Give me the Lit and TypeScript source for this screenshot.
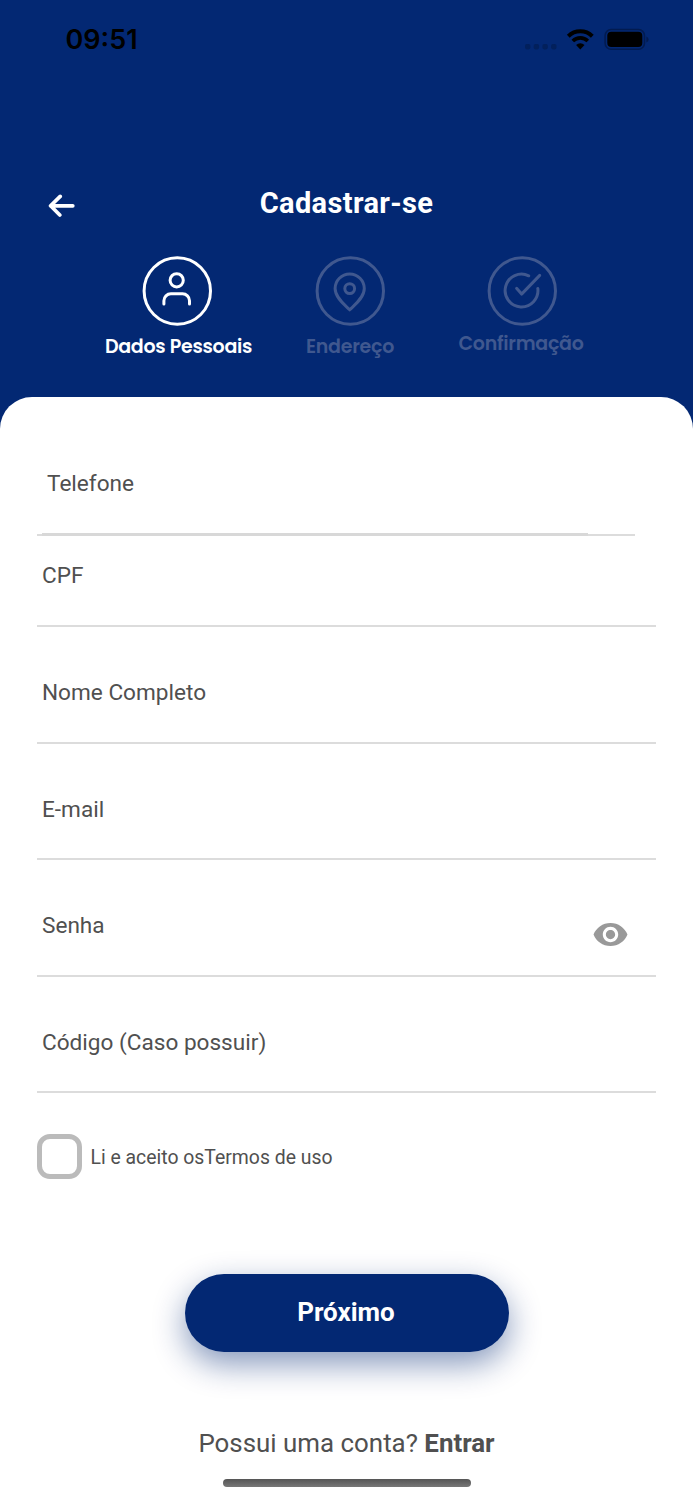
import { LitElement, html, css, svg, nothing } from "lit";
import { customElement, property, state } from "lit/decorators.js";

type StepIcon = "person" | "pin" | "check";

@customElement("status-bar")
class StatusBar extends LitElement {
  static styles = css`
    :host { display: flex; justify-content: space-between; height: 80px; padding: 0 44px 0 65.5px; box-sizing: border-box; }
    .time { font: 600 27px/32px Inter, sans-serif; color: #000; padding-top: 24px; letter-spacing: 0; }
    .icons { padding-top: 24px; display: block; }
  `;
  render() {
    return html`
      <span class="time">09:51</span>
      <svg class="icons" width="125" height="30" viewBox="524 24 125 30">
        <g fill="#02205c">
          ${[527.7, 536.4, 545.1, 553.8].map((x) => svg`<rect x=${x - 2.7} y="44" width="5.4" height="5.4" rx="1.8"/>`)}
        </g>
        <g fill="none" stroke="#000" stroke-width="4">
          <path d="M568.3 36.2a17.2 17.2 0 0 1 24 0"/>
          <path d="M572.8 41a10.8 10.8 0 0 1 15 0" stroke-width="3.7"/>
        </g>
        <path d="M580.3 49.4l-4.2-4.4a6.2 6.2 0 0 1 8.4 0z"/>
        <rect x="605.1" y="29.6" width="39.4" height="19.6" rx="6" fill="none" stroke="#021b50" stroke-width="1.5"/>
        <rect x="607.3" y="31.7" width="35" height="15.4" rx="4"/>
        <path d="M646.4 36.6q2.2 1 2.2 2.9t-2.2 2.9z" fill="#021b50"/>
      </svg>
    `;
  }
}

@customElement("signup-step")
class SignupStep extends LitElement {
  @property() icon: StepIcon = "person";
  @property() label = "";
  @property({ type: Boolean, reflect: true }) active = false;

  static styles = css`
    :host { display: flex; flex-direction: column; align-items: center; color: #40588f; }
    :host([active]) { color: #fff; }
    .ring { display: block; fill: none; stroke: currentColor; stroke-width: 3; stroke-linecap: round; stroke-linejoin: round; }
    .label { font: 600 19px/24px Poppins, Inter, sans-serif; letter-spacing: -0.27px; white-space: nowrap; margin-top: var(--gap, 9px); padding: 0 var(--pad-right, 0) 0 var(--pad-left, 0); }
  `;

  private glyph() {
    switch (this.icon) {
      case "person":
        return svg`<circle cx="34.4" cy="24.3" r="6.6"/><path d="M21.6 48v-3.2a7 7 0 0 1 7-7h11.6a7 7 0 0 1 7 7V48"/>`;
      case "pin":
        return svg`<path d="M34.4 53.8C30 49.4 19.8 42 19.8 32.6a14.6 14.6 0 0 1 29.2 0C49 42 38.8 49.4 34.4 53.8z"/><circle cx="34.4" cy="32.6" r="4.9"/>`;
      case "check":
        return svg`<path d="M41.4 19.8a16.4 16.4 0 1 0 9.1 12.6"/><path d="M29.3 32.3l5 5.8L52.4 19.4"/>`;
    }
  }

  render() {
    return html`
      <svg class="ring" width="70" height="70" viewBox="-0.3 0 70 70">
        <circle cx="35" cy="35" r="33.2"/>
        ${this.glyph()}
      </svg>
      <span class="label">${this.label}</span>
    `;
  }
}

@customElement("form-field")
class FormField extends LitElement {
  @property() label = "";
  @property({ type: Boolean }) secret = false;

  static styles = css`
    :host { display: block; margin-bottom: 25.6px; }
    .field { height: 91px; box-sizing: border-box; border-bottom: 2px solid #dcdcdc; display: flex; justify-content: space-between; padding: 26.4px 27.5px 0 5px; }
    .label { font: 400 22.6px/28px Roboto, sans-serif; color: #505050; white-space: nowrap; }
    .eye { display: block; width: 37px; height: 37px; fill: #999; margin-top: 4px; }
  `;
  render() {
    return html`
      <div class="field">
        <span class="label">${this.label}</span>
        ${this.secret
          ? html`<svg class="eye" viewBox="0 0 24 24"><path d="M12 4.5C7 4.5 2.73 7.61 1 12c1.73 4.39 6 7.5 11 7.5s9.27-3.11 11-7.5c-1.73-4.39-6-7.5-11-7.5zM12 17c-2.76 0-5-2.24-5-5s2.24-5 5-5 5 2.24 5 5-2.24 5-5 5zm0-8c-1.66 0-3 1.34-3 3s1.34 3 3 3 3-1.34 3-3-1.34-3-3-3z"/></svg>`
          : nothing}
      </div>
    `;
  }
}

@customElement("app-root")
class AppRoot extends LitElement {
  @state() private accepted = false;

  static styles = css`
    :host { display: block; width: 693px; height: 1500px; overflow: hidden; background: #032873; font-family: Roboto, sans-serif; color: #505050; }
    .top { height: 397px; }
    .title-row { display: grid; grid-template-columns: 1fr auto 1fr; align-items: start; padding: 104px 48px 0; height: 152px; box-sizing: border-box; }
    .back { display: block; margin-top: 9px; }
    .title { margin: 1px 0 0; font: 700 29px/36px Roboto, sans-serif; color: #fff; letter-spacing: 0.35px; }
    .steps { display: flex; margin-top: 24px; padding-left: 97px; }
    .step { width: 160px; --pad-left: 3px; }
    .step-2 { width: 186px; }
    .step-3 { width: 158px; --gap: 6px; --pad-right: 2px; }
    .card { height: 1103px; box-sizing: border-box; background: #fff; border-radius: 32px 32px 0 0; padding: 0 37px; }
    .phone { width: 597.5px; height: 139px; box-sizing: border-box; border-bottom: 2px solid #dcdcdc; padding: 73px 0 0 5px; display: flex; flex-direction: column; }
    .phone-label { font: 400 22.6px/28px Roboto, sans-serif; padding-left: 5px; }
    .phone-line { width: 546px; height: 3px; margin: auto 0 -2px; background: #d8d8d8; }
    .terms { display: flex; align-items: center; gap: 8.5px; height: 45px; margin-top: 40.6px; }
    .box { width: 45px; height: 45px; box-sizing: border-box; border: 5px solid #bbb; border-radius: 13px; }
    .terms-text { font-size: 19.4px; line-height: 24px; padding-top: 3px; }
    .next { display: block; margin: 95px 0 0 147.5px; width: 324px; height: 78px; border: 0; border-radius: 39px; background: #032873; color: #fff; font: 700 26px/32px Roboto, sans-serif; padding: 0 1px 1px 0; box-shadow: 0 12px 32px rgba(3, 40, 115, 0.48); }
    .login { margin: 75px 0 0; text-align: center; font-size: 25.9px; line-height: 32px; }
    .login-link { font-weight: 700; }
    .home { width: 248px; height: 8px; margin: 20px auto 0; border-radius: 4px; background: linear-gradient(#555, #777); }
  `;

  render() {
    return html`
      <header class="top">
        <status-bar></status-bar>
        <div class="title-row">
          <svg class="back" width="28" height="26" viewBox="48 193 28 26" fill="none" stroke="#fff" stroke-width="3.7" stroke-linecap="round" stroke-linejoin="round">
            <path d="M72.8 205.8H50.6M60.2 196.4l-9.6 9.4 9.2 9.2"/>
          </svg>
          <h1 class="title">Cadastrar-se</h1>
        </div>
        <nav class="steps">
          <signup-step class="step" active icon="person" label="Dados Pessoais"></signup-step>
          <signup-step class="step-2" icon="pin" label="Endereço"></signup-step>
          <signup-step class="step-3" icon="check" label="Confirmação"></signup-step>
        </nav>
      </header>
      <main class="card">
        <div class="phone">
          <span class="phone-label">Telefone</span>
          <div class="phone-line"></div>
        </div>
        ${["CPF", "Nome Completo", "E-mail", "Senha", "Código (Caso possuir)"].map(
          (l) => html`<form-field label=${l} ?secret=${l === "Senha"}></form-field>`
        )}
        <div class="terms" role="checkbox" aria-checked=${this.accepted} @click=${() => (this.accepted = !this.accepted)}>
          <span class="box"></span>
          <span class="terms-text">Li e aceito osTermos de uso</span>
        </div>
        <button class="next">Próximo</button>
        <p class="login">Possui uma conta? <span class="login-link">Entrar</span></p>
        <div class="home"></div>
      </main>
    `;
  }
}
